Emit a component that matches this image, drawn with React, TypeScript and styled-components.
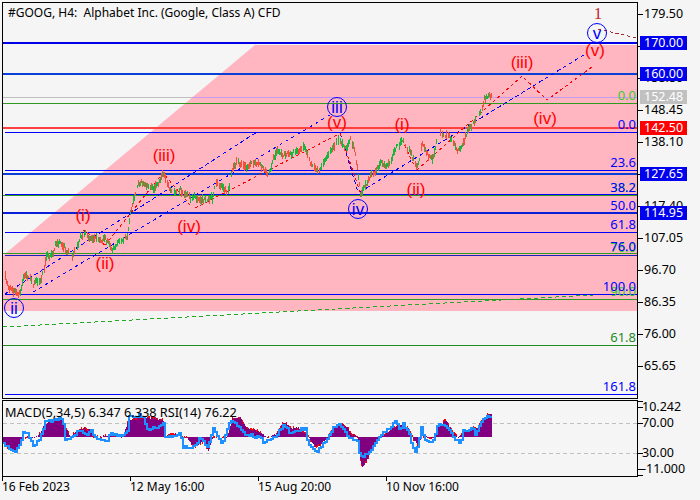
import React from "react";
import styled, { createGlobalStyle } from "styled-components";

const FONT = `"Noto Sans", "Liberation Sans", sans-serif`;
const WAVE_FONT = `"Liberation Sans", Arial, sans-serif`;

const Global = createGlobalStyle`
  html, body { margin: 0; padding: 0; background: #f5f5f5; overflow: hidden; }
  #root { width: 700px; height: 500px; }
`;

const Page = styled.div`
  width: 700px;
  height: 500px;
  box-sizing: border-box;
  padding: 2px 0 0 2px;
  background: #f5f5f5;
  display: grid;
  grid-template-columns: 636px 62px;
  grid-template-rows: 397px 77px 1fr;
  row-gap: 1px;
  font-family: ${FONT};
  color: #000;
`;

const Pane = styled.div`
  position: relative;
  box-sizing: border-box;
  border: 1px solid #000;
  overflow: hidden;
`;

const Plot = styled.svg`
  display: block;
  font-family: ${FONT};
`;

const Title = styled.div`
  position: absolute;
  left: 5px;
  top: 2px;
  font-size: 12px;
  line-height: 16px;
  white-space: pre;
`;

const IndicatorLegend = styled(Title)`
  left: 2px;
  top: 3px;
  font-size: 12.7px;
`;

const PriceAxis = styled.div`
  position: relative;
  display: flex;
  flex-direction: column;
  margin-top: -4px;
`;

const ScaleRow = styled.div`
  flex: 0 0 32px;
  display: flex;
  align-items: center;
  gap: 1px;
  font-size: 12.5px;
  line-height: 16px;
`;

const RowTick = styled.i`
  flex: 0 0 5px;
  height: 1px;
  background: #000;
`;

const IndicatorAxis = styled.div`
  position: relative;
`;

const Tick = styled.i<{ $y: number }>`
  position: absolute;
  left: 0;
  top: ${(p) => p.$y}px;
  width: 5px;
  height: 1px;
  background: #000;
`;

const AxisLabel = styled.span<{ $y: number }>`
  position: absolute;
  left: 4px;
  top: ${(p) => p.$y - 8}px;
  font-size: 12.5px;
  line-height: 16px;
  white-space: nowrap;
`;

const PriceTag = styled.span<{ $y: number; $bg: string }>`
  position: absolute;
  left: 2px;
  top: ${(p) => p.$y - 7}px;
  width: 47px;
  height: 14px;
  box-sizing: border-box;
  padding-left: 4px;
  background: ${(p) => p.$bg};
  color: #fff;
  font-size: 12.5px;
  line-height: 14px;
`;

const TimeAxis = styled.div`
  grid-column: 1 / 3;
  margin-top: -1px;
  display: grid;
  grid-template-columns: repeat(4, 128px);
  align-content: start;
`;

const TimeCell = styled.div`
  display: flex;
  flex-direction: column;
  font-size: 12px;
  line-height: 16px;
  white-space: nowrap;
`;

const TimeTick = styled.i`
  display: block;
  width: 1px;
  height: 4px;
  margin-bottom: -2px;
  background: #000;
`;

type Pt = [number, number];

const pricePath: Pt[] = [
  [3, 272], [8, 285], [13, 291], [20, 291], [24, 276], [30, 277], [33, 287], [40, 280], [44, 270], [46, 257],
  [52, 256], [55, 246], [60, 243], [65, 250], [72, 255], [80, 237], [85, 234], [92, 236], [100, 243], [108, 243],
  [113, 248], [120, 240], [127, 235], [130, 212], [134, 197], [138, 184], [142, 180], [150, 188], [160, 182],
  [163, 175], [170, 188], [178, 190], [183, 193], [190, 202], [195, 197], [205, 197], [212, 198], [215, 184],
  [222, 186], [227, 197], [232, 170], [236, 162], [245, 166], [255, 166], [270, 170], [277, 152], [290, 152],
  [305, 144], [312, 165], [320, 165], [330, 150], [340, 135], [345, 145], [350, 138], [355, 150], [360, 192],
  [370, 178], [380, 165], [390, 160], [396, 148], [403, 142], [413, 162], [417, 170], [422, 145], [433, 160],
  [440, 133], [447, 133], [460, 150], [473, 126], [480, 115], [485, 98], [491, 97],
];

function interp(path: Pt[], x: number): number {
  for (let i = 1; i < path.length; i++) {
    if (x <= path[i][0]) {
      const [x0, y0] = path[i - 1];
      const [x1, y1] = path[i];
      return y0 + ((y1 - y0) * (x - x0)) / (x1 - x0 || 1);
    }
  }
  return path[path.length - 1][1];
}

function makeRandom(start: number) {
  let seed = start;
  return () => {
    seed = (seed * 1664525 + 1013904223) >>> 0;
    return seed / 4294967296;
  };
}

function buildCandles() {
  const rnd = makeRandom(20230216);
  let green = "";
  let red = "";
  let drift = 0;
  for (let x = 4; x <= 491; x++) {
    drift = drift * 0.82 + (rnd() - 0.5) * 4.5;
    if (rnd() < 0.12) continue;
    const c = interp(pricePath, x) + drift;
    const slope = interp(pricePath, x + 1) - interp(pricePath, x);
    const top = Math.round(c - 1 - rnd() * 4);
    const bot = Math.round(c + 1 + rnd() * 4);
    const up = slope < 0 ? rnd() < 0.66 : rnd() < 0.34;
    const seg = `M${x + 0.5} ${top}V${bot}`;
    if (up) green += seg;
    else red += seg;
  }
  return { green, red };
}

const candles = buildCandles();

const hist: Pt[] = [
  [3, 443], [10, 450], [15, 452], [20, 443], [23, 438], [27, 437], [37, 437], [43, 427], [50, 420], [62, 419], [65, 427],
  [70, 437], [75, 432], [83, 428], [90, 430], [93, 436], [100, 437], [110, 435], [120, 437], [123, 437], [128, 420],
  [140, 417], [155, 418], [163, 420], [165, 437], [173, 433], [180, 437], [187, 438], [193, 447], [203, 442], [208, 450],
  [213, 437], [227, 437], [232, 418], [240, 418], [247, 428], [257, 430], [267, 438], [277, 433], [283, 422], [292, 428],
  [300, 428], [307, 435], [310, 440], [315, 448], [322, 443], [328, 437], [333, 428], [340, 423], [348, 428], [350, 433],
  [357, 437], [360, 460], [362, 468], [367, 460], [373, 445], [380, 437], [390, 430], [397, 425], [408, 428], [412, 437],
  [417, 445], [422, 437], [435, 438], [438, 427], [445, 420], [452, 430], [458, 437], [463, 432], [472, 427], [477, 428],
  [480, 422], [487, 414], [491, 414],
];

const rsi: Pt[] = [
  [3, 443], [10, 450], [15, 452], [20, 443], [23, 433], [28, 435], [33, 447], [40, 437], [45, 422], [53, 420], [62, 418],
  [65, 440], [72, 437], [80, 430], [87, 435], [90, 430], [95, 438], [107, 442], [110, 433], [120, 437], [127, 430],
  [128, 417], [142, 415], [147, 430], [157, 427], [163, 423], [165, 438], [180, 433], [183, 447], [192, 448], [200, 437],
  [207, 448], [213, 428], [222, 445], [230, 420], [240, 428], [245, 435], [260, 437], [263, 442], [277, 435], [283, 425],
  [290, 433], [305, 428], [308, 445], [317, 452], [328, 437], [333, 428], [340, 425], [348, 437], [357, 442], [360, 458],
  [370, 452], [375, 442], [382, 432], [388, 430], [395, 422], [400, 430], [403, 423], [410, 437], [412, 447], [416, 453],
  [421, 428], [425, 440], [432, 443], [438, 423], [445, 425], [453, 437], [460, 445], [463, 430], [472, 428], [475, 435],
  [480, 423], [485, 418], [491, 417],
];

const ZERO = 437;

function buildIndicator() {
  const rnd = makeRandom(76220);
  let bars = "";
  let dots = "";
  for (let x = 3; x <= 491; x++) {
    const y = Math.round(interp(hist, x) + (rnd() - 0.5) * 2);
    bars += `M${x + 0.5} ${ZERO}V${y}`;
    if (rnd() < 0.4) {
      const e = y < ZERO ? y - 1 : y + 1;
      dots += `M${x + 0.5} ${e}v${y < ZERO ? 2 : -2}`;
    }
  }
  let line = `M3 ${Math.round(interp(rsi, 3))}`;
  for (let x = 5; x <= 491; x += 2) {
    line += `H${x}V${Math.round(interp(rsi, x) + (rnd() - 0.5) * 3)}`;
  }
  return { bars, dots, line };
}

const indicator = buildIndicator();

const BLUE = "#0000ff";
const LEVELS: { y: number; c: string; w: number; x0?: number }[] = [
  { y: 43, c: "#0000e6", w: 2 },
  { y: 74, c: "#0a40d8", w: 2 },
  { y: 103.5, c: "#2e9a1e", w: 1 },
  { y: 127.5, c: "#ff4040", w: 2 },
  { y: 132.5, c: BLUE, w: 1, x0: 5 },
  { y: 170.5, c: BLUE, w: 1, x0: 5 },
  { y: 174, c: "#0a40d8", w: 2 },
  { y: 195.5, c: "#2e9a1e", w: 1 },
  { y: 194.5, c: BLUE, w: 1, x0: 5 },
  { y: 213, c: "#0a20d8", w: 2 },
  { y: 232.5, c: BLUE, w: 1, x0: 5 },
  { y: 253.5, c: "#2e9a1e", w: 1 },
  { y: 255.5, c: "#2020c0", w: 1, x0: 5 },
  { y: 294.5, c: BLUE, w: 1, x0: 5 },
  { y: 299.5, c: "#2e9a1e", w: 1 },
  { y: 345.5, c: "#228b22", w: 1 },
  { y: 394.5, c: BLUE, w: 1, x0: 5 },
];

const FIBS: { t: string; y: number; c: string }[] = [
  { t: "0.0", y: 100, c: "#32cd32" },
  { t: "0.0", y: 129, c: BLUE },
  { t: "23.6", y: 167, c: BLUE },
  { t: "38.2", y: 192, c: "#32cd32" },
  { t: "38.2", y: 192, c: BLUE },
  { t: "50.0", y: 210, c: BLUE },
  { t: "61.8", y: 229, c: BLUE },
  { t: "76.0", y: 252, c: "#32cd32" },
  { t: "76.0", y: 251, c: BLUE },
  { t: "90.0", y: 296, c: "#32cd32" },
  { t: "100.0", y: 291, c: BLUE },
  { t: "61.8", y: 342, c: "#228b22" },
  { t: "161.8", y: 391, c: BLUE },
];

const REDS: [string, number, number][] = [
  ["(iii)", 164, 161],
  ["(i)", 83, 221],
  ["(ii)", 105, 269],
  ["(iv)", 189, 232],
  ["(v)", 337, 128],
  ["(i)", 402, 130],
  ["(ii)", 416, 195],
  ["(iii)", 522, 68],
  ["(iv)", 545, 124],
  ["(v)", 595, 56],
];

const CIRCLES: [string, number, number][] = [
  ["ii", 14, 308],
  ["iii", 337, 107],
  ["iv", 358, 209],
  ["v", 597, 33],
];

const PRICE_TICKS = [
  "179.50", "169.15", "158.80", "148.45", "138.10", "127.75",
  "117.40", "107.05", "96.70", "86.35", "76.00", "65.65",
];

const PRICE_TAGS: [string, number, string][] = [
  ["170.00", 45, "#0000ee"],
  ["160.00", 76, "#0000ee"],
  ["152.48", 99, "#c0c0c0"],
  ["142.50", 130, "#ff0000"],
  ["127.65", 176, "#0000ee"],
  ["114.95", 215, "#0000ee"],
];

const IND_TICKS: [string | null, number][] = [
  [null, 1],
  ["10.242", 7],
  ["70.00", 23],
  ["30.00", 53],
  ["-11.000", 69],
  [null, 75],
];

const TIMES = ["16 Feb 2023", "12 May 16:00", "15 Aug 20:00", "10 Nov 16:00"];

function MainChart() {
  return (
    <Plot width={634} height={395} viewBox="3 3 634 395">
      <polygon points="255,45 640,45 640,311 0,311 0,258" fill="#ffb6c1" />
      <line x1={0} x2={192} y1={97.5} y2={97.5} stroke="#c0c0c0" />
      <line x1={192} x2={640} y1={97.5} y2={97.5} stroke="#c79bf0" />
      {LEVELS.map((l, i) => (
        <line key={i} x1={l.x0 ?? 0} x2={640} y1={l.y} y2={l.y} stroke={l.c} strokeWidth={l.w} shapeRendering="crispEdges" />
      ))}
      <line x1={3} y1={327} x2={593} y2={295} stroke="#22aa22" strokeDasharray="4 3" shapeRendering="crispEdges" />
      <g fill="none" stroke={BLUE} strokeDasharray="4 3" shapeRendering="crispEdges">
        <line x1={5} y1={294} x2={257} y2={132} />
        <line x1={33} y1={292} x2={330} y2={115} strokeDasharray="3 4" />
        <line x1={340} y1={133} x2={358} y2={192} />
        <line x1={360} y1={192} x2={587} y2={53} />
      </g>
      <g fill="none" stroke="#ff0000" strokeDasharray="3 3" shapeRendering="crispEdges">
        <polyline points="83,230 105,245" />
        <polyline points="105,245 163,173 190,205" />
        <line x1={195} y1={208} x2={337} y2={135} />
        <line x1={340} y1={133} x2={360} y2={192} />
        <polyline points="402,140 414,165" />
        <polyline points="417,170 522,76 547,100 592,67" />
      </g>
      <polyline points="598,29 637,38" fill="none" stroke="#a52a2a" strokeDasharray="3 3" shapeRendering="crispEdges" />
      <path d={candles.red} stroke="#f2503a" strokeWidth={1} shapeRendering="crispEdges" />
      <path d={candles.green} stroke="#14b83c" strokeWidth={1} shapeRendering="crispEdges" />
      {FIBS.map((f, i) => (
        <text key={i} x={636} y={f.y} textAnchor="end" fontSize={13} fill={f.c}>
          {f.t}
        </text>
      ))}
      {REDS.map(([t, x, y], i) => (
        <text key={i} x={x} y={y} textAnchor="middle" fontSize={17} fontFamily={WAVE_FONT} fill="#ff0000">
          {t}
        </text>
      ))}
      {CIRCLES.map(([t, x, y]) => (
        <g key={t}>
          <circle cx={x} cy={y} r={9.5} fill="none" stroke={BLUE} />
          <text x={x} y={y + 5.5} textAnchor="middle" fontSize={17} fontFamily={WAVE_FONT} fill={BLUE}>
            {t}
          </text>
        </g>
      ))}
      <text x={598} y={19} textAnchor="middle" fontSize={17} fontFamily="Liberation Serif, serif" fill="#c0282d">
        1
      </text>
    </Plot>
  );
}

function IndicatorChart() {
  return (
    <Plot width={634} height={75} viewBox="3 401 634 75">
      <line x1={3} x2={640} y1={423.5} y2={423.5} stroke="#c0c0c0" strokeDasharray="4 3" />
      <line x1={3} x2={640} y1={453.5} y2={453.5} stroke="#c0c0c0" strokeDasharray="4 3" />
      <path d={indicator.bars} stroke="#800080" shapeRendering="crispEdges" />
      <path d={indicator.dots} stroke="#ff0000" shapeRendering="crispEdges" />
      <path d={indicator.line} fill="none" stroke="#1e90ff" strokeWidth={2} shapeRendering="crispEdges" />
    </Plot>
  );
}

export default function App() {
  return (
    <Page>
      <Global />
      <Pane>
        <MainChart />
        <Title>{"#GOOG, H4:  Alphabet Inc. (Google, Class A) CFD"}</Title>
      </Pane>
      <PriceAxis>
        {PRICE_TICKS.map((t) => (
          <ScaleRow key={t}>
            <RowTick />
            {t}
          </ScaleRow>
        ))}
        {PRICE_TAGS.map(([t, y, c]) => (
          <PriceTag key={t} $y={y} $bg={c}>
            {t}
          </PriceTag>
        ))}
      </PriceAxis>
      <Pane>
        <IndicatorChart />
        <IndicatorLegend>MACD(5,34,5) 6.347 6.338 RSI(14) 76.22</IndicatorLegend>
      </Pane>
      <IndicatorAxis>
        {IND_TICKS.map(([t, y]) => (
          <React.Fragment key={y}>
            <Tick $y={y} />
            {t && <AxisLabel $y={y}>{t}</AxisLabel>}
          </React.Fragment>
        ))}
      </IndicatorAxis>
      <TimeAxis>
        {TIMES.map((t) => (
          <TimeCell key={t}>
            <TimeTick />
            {t}
          </TimeCell>
        ))}
      </TimeAxis>
    </Page>
  );
}
